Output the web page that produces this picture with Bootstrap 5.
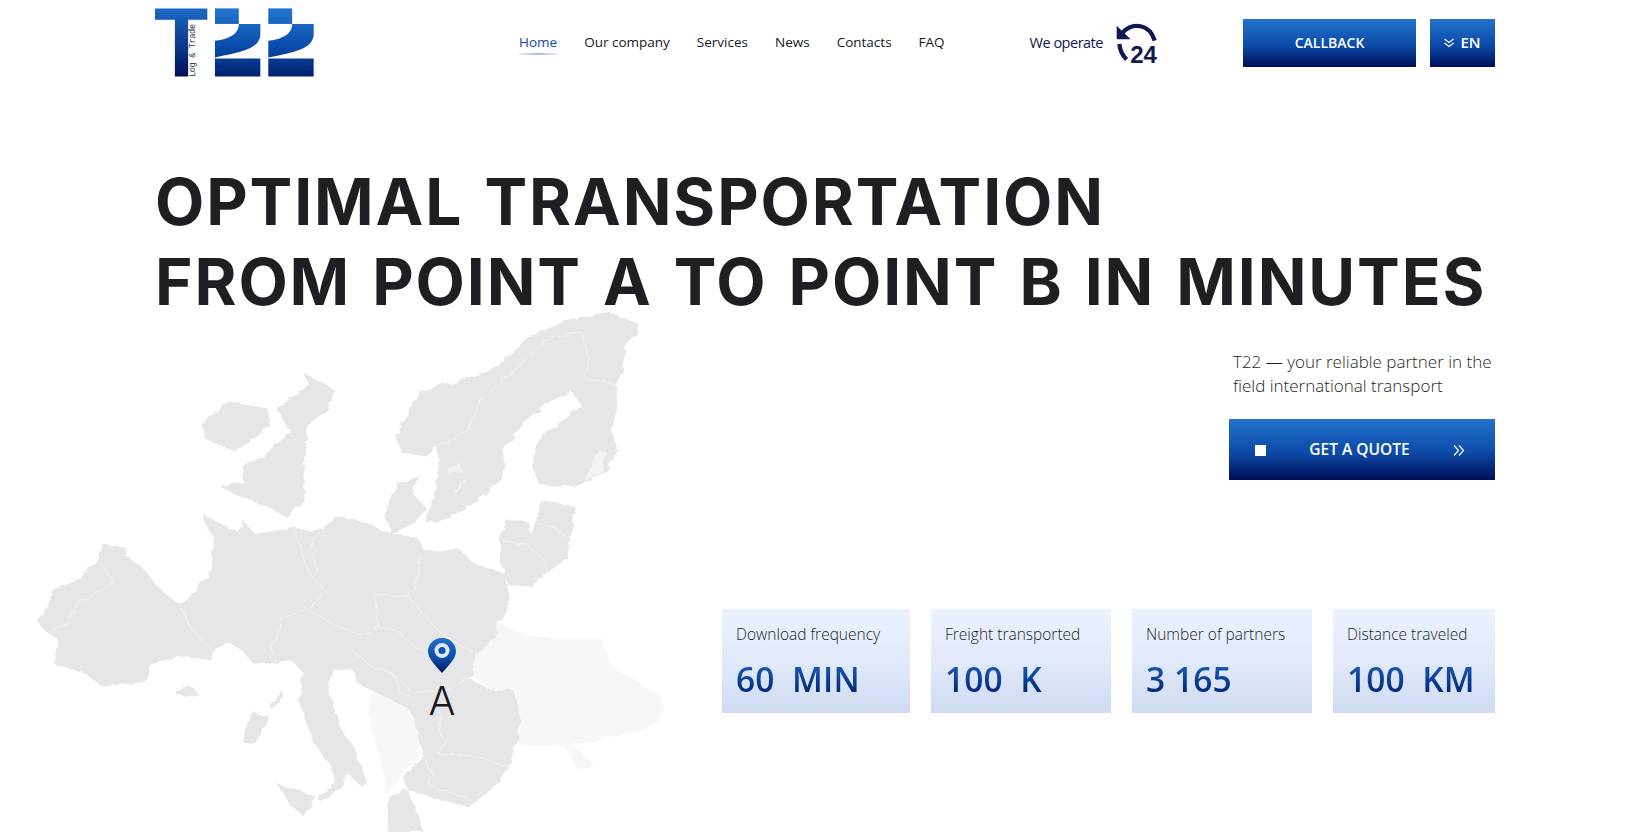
<!DOCTYPE html>
<html lang="en">
<head>
  <meta charset="UTF-8" />
  <title>T22 Log &amp; Trade</title>
  <meta name="viewport" content="width=device-width, initial-scale=1" />
  <link href="https://cdn.jsdelivr.net/npm/bootstrap@5.3.3/dist/css/bootstrap.min.css" rel="stylesheet" />
  <style>
    body {
      background: #fff;
      color: #1d1f23;
      font-family: "Open Sans", "Liberation Sans", sans-serif;
      height: 832px;
      overflow: hidden;
      position: relative;
    }
    .page-wrap { width: 1340px; margin: 0 auto; position: relative; z-index: 1; }

    /* header */
    .top-bar { height: 85px; }
    .brand-logo { display: block; width: 159px; height: 69px; margin-top: -1px; }
    .top-nav { margin-left: 205px; gap: 27px; }
    .top-nav .nav-link { padding: 0; color: #16181d; font-size: 13.5px; position: relative; }
    .top-nav .nav-link.active { color: #0f47a6; }
    .top-nav .nav-link.active::after {
      content: "";
      position: absolute;
      left: 0;
      right: 0;
      bottom: -2px;
      height: 2px;
      background: linear-gradient(90deg, #e6edf9, #a3bbe2, #e6edf9);
    }
    .operate { margin-left: 85px; font-size: 14.5px; color: #10194f; letter-spacing: -.5px; gap: 13px; }
    .operate svg { overflow: visible; }
    .blue-btn {
      background: linear-gradient(180deg, #2173cc 0%, #0c4aa8 55%, #000f58 100%);
      border: 0;
      border-radius: 0;
      color: #fff;
      font-weight: 600;
      font-size: 14px;
      --bs-btn-hover-color: #fff;
    }
    .btn-callback { width: 173px; height: 48px; margin-left: auto; }
    .btn-lang { width: 65px; height: 48px; margin-left: 14px; font-size: 15px; gap: 6px; }

    /* hero */
    .hero-title {
      margin: 77px 0 0;
      font-family: "Inter", "Liberation Sans", sans-serif;
      font-size: 64px;
      line-height: 80px;
      font-weight: 700;
      letter-spacing: 1.9px;
      word-spacing: 4px;
      color: #1d1f23;
      white-space: nowrap;
    }
    .hero-side { width: 266px; margin: 28px 0 0 auto; }
    .hero-side p { margin: 0 0 21px 4px; font-size: 17px; line-height: 24px; font-weight: 300; white-space: nowrap; }
    .btn-quote { width: 266px; height: 61px; padding: 1px 30px 0 26px; font-size: 15.5px; }
    .quote-square { width: 11px; height: 11px; background: #fff; }

    /* stats */
    .stat-row { margin-top: 129px; gap: 21px; }
    .stat-box {
      height: 104px;
      padding: 15px 14px 0;
      background: linear-gradient(180deg, #ebf1fe 0%, #e2eafa 50%, #cedbf2 100%);
    }
    .stat-box:nth-child(1) { width: 188px; }
    .stat-box:nth-child(2) { width: 180px; }
    .stat-box:nth-child(3) { width: 180px; }
    .stat-box:nth-child(4) { width: 162px; }
    .stat-label { font-size: 15.5px; line-height: 20px; font-weight: 300; white-space: nowrap; }
    .stat-value {
      margin-top: 14px;
      font-size: 33.5px;
      line-height: 42px;
      font-weight: 600;
      letter-spacing: .1px;
      white-space: nowrap;
      background: linear-gradient(180deg, #1a5ec0 10%, #00226e 90%);
      -webkit-background-clip: text;
      background-clip: text;
      color: transparent;
    }

    /* map */
    .euro-map { position: absolute; left: 0; top: 300px; width: 700px; height: 532px; z-index: 0; }
    .map-pin { position: absolute; left: 428px; top: 638px; width: 28px; height: 35px; z-index: 1; }
    .map-letter {
      position: absolute;
      left: 425px;
      top: 677px;
      width: 34px;
      text-align: center;
      font-family: "Inter", "Liberation Sans", sans-serif;
      font-size: 40px;
      line-height: 48px;
      font-weight: 300;
      color: #16181d;
      z-index: 1;
    }
  </style>
</head>
<body>
  <!-- map background, traced from the picture -->
  <svg class="euro-map" viewBox="0 0 1568 1568" preserveAspectRatio="none" aria-hidden="true">
    <defs>
      <filter id="roughCoast" x="-5%" y="-5%" width="110%" height="110%">
        <feTurbulence type="fractalNoise" baseFrequency="0.035" numOctaves="3" seed="4" result="noise" />
        <feDisplacementMap in="SourceGraphic" in2="noise" scale="16" />
      </filter>
      <filter id="softEdge" x="-5%" y="-5%" width="110%" height="110%">
        <feTurbulence type="fractalNoise" baseFrequency="0.02" numOctaves="2" seed="9" result="noise" />
        <feDisplacementMap in="SourceGraphic" in2="noise" scale="14" />
        <feGaussianBlur stdDeviation="2" />
      </filter>
    </defs>
    <g fill="#f7f7f9" filter="url(#softEdge)">
      <path d="M1060 1040L1115 950L1190 990L1270 1000L1350 1000L1370 1080L1485 1170L1475 1250L1370 1290L1280 1310L1330 1370L1290 1385L1270 1320L1180 1310L1155 1305L1165 1230L1150 1145L1100 1150L1050 1100Z" />
      <path d="M830 1155L880 1180L920 1210L945 1340L900 1400L860 1460L860 1400L840 1290L825 1220Z" />
    </g>
    <g filter="url(#roughCoast)">
      <g fill="#e6e6e9">
        <path d="M82 945L110 905L115 860L180 820L215 770L230 718L280 730L285 755L320 790L350 840L375 870L400 895L425 870L460 820L480 790L470 740L480 700L455 650L455 630L480 650L510 670L530 680L545 650L570 690L620 680L655 665L700 685L740 660L745 635L790 645L830 660L855 680L885 690L935 700L950 740L1030 735L1060 775L1135 810L1140 900L1115 950L1110 1000L1065 1040L1060 1100L1050 1115L1100 1150L1150 1145L1165 1230L1155 1310L1140 1380L1105 1440L1050 1495L980 1470L900 1440L865 1480L870 1568L950 1568L900 1400L950 1350L920 1210L880 1180L830 1150L800 1130L790 1090L750 1090L735 1130L740 1170L770 1280L790 1310L820 1420L810 1435L775 1390L770 1430L720 1480L715 1460L750 1420L745 1380L700 1300L670 1180L680 1100L655 1065L610 1070L570 1075L540 1030L510 1010L480 1030L470 1060L400 1050L335 1075L330 1120L285 1130L230 1140L190 1100L125 1075L130 1000L100 975Z" />
        <path d="M885 400L910 350L940 270L1000 245L1060 225L1130 185L1150 145L1200 100L1270 60L1360 35L1430 70L1425 110L1400 130L1395 210L1380 250L1385 310L1370 380L1385 450L1350 510L1290 550L1210 545L1190 490L1210 400L1260 360L1300 310L1280 270L1230 300L1170 370L1125 440L1130 520L1090 570L1040 620L1000 640L955 660L975 560L985 470L980 430L950 460L900 450Z" />
        <path d="M860 640L890 540L940 520L925 570L960 620L920 660L880 690Z" />
        <path d="M1120 700L1135 650L1180 650L1185 690L1205 640L1210 590L1290 610L1270 760L1220 810L1190 845L1140 840L1120 770Z" />
        <path d="M490 545L545 540L545 490L590 460L650 390L620 320L690 250L680 215L750 265L735 320L690 370L680 520L685 590L640 640L600 610L520 570Z" />
        <path d="M450 370L510 300L600 320L605 370L560 420L525 445L460 410Z" />
        <path d="M620 1425L710 1465L680 1520L650 1490Z" />
        <path d="M545 1280L565 1215L605 1230L570 1310L545 1305Z" />
        <path d="M600 1200L630 1150L635 1165L615 1205Z" />
        <path d="M390 1150L430 1140L450 1170L400 1165Z" />
      </g>
      <!-- borders -->
      <g fill="none" stroke="#f5f5f7" stroke-width="2">
        <path d="M400 895L430 970L475 1035" />
        <path d="M225 775L255 830L225 860L175 890L150 955L115 970" />
        <path d="M660 670L690 800L730 860L690 910L630 940L610 1030L615 1070" />
        <path d="M945 745L925 850L915 875L840 870L850 965L810 990L740 950L680 905" />
        <path d="M915 875L985 980L1060 1040" />
        <path d="M850 965L890 975L925 1020L990 1060" />
        <path d="M780 1020L830 1080L880 1100L925 1160L1000 1150L1050 1115" />
        <path d="M880 1100L900 1160L925 1170" />
        <path d="M990 1230L980 1270L1000 1300L985 1340L1020 1340L1080 1350L1140 1380" />
        <path d="M950 1350L970 1400L960 1430L1050 1470" />
        <path d="M985 430L1050 380L1080 290L1150 210L1220 120L1300 90" />
        <path d="M1300 90L1320 170L1310 230L1380 250" />
        <path d="M1125 710L1180 720L1220 770L1225 810" />
        <path d="M1205 660L1240 670L1270 700" />
        <path d="M730 660L700 720L710 800" />
      </g>
      <g fill="#f3f3f5">
        <path d="M1000 500L1030 480L1035 505L1010 515Z" />
        <path d="M1015 560L1045 525L1040 540L1020 565Z" />
        <path d="M1310 530L1340 440L1360 450L1345 510Z" />
      </g>
    </g>
  </svg>

  <svg class="map-pin" viewBox="0 0 28 35" aria-hidden="true">
    <defs>
      <linearGradient id="pinFill" x1="0" y1="0" x2="0" y2="1">
        <stop offset="0" stop-color="#1f6fca" />
        <stop offset=".55" stop-color="#0d4dac" />
        <stop offset="1" stop-color="#001a63" />
      </linearGradient>
    </defs>
    <path fill="url(#pinFill)" d="M14 0C6 0 0 6 0 13.5C0 21 9 29 14 35C19 29 28 21 28 13.5C28 6 22 0 14 0Z" />
    <circle cx="14" cy="12.5" r="7.5" fill="#dfe8f7" />
    <circle cx="14" cy="12.5" r="3.6" fill="#0f4fae" />
  </svg>
  <div class="map-letter">A</div>

  <div class="page-wrap">
    <header class="top-bar d-flex align-items-center">
      <a href="#" class="d-block">
        <svg class="brand-logo" viewBox="72 24 480 206" role="img" aria-label="T22 Log &amp; Trade">
          <defs>
            <linearGradient id="logoFill" gradientUnits="userSpaceOnUse" x1="0" y1="24" x2="0" y2="230">
              <stop offset="0" stop-color="#2176cf" />
              <stop offset=".55" stop-color="#0c4cac" />
              <stop offset="1" stop-color="#00226e" />
            </linearGradient>
            <linearGradient id="stemFill" gradientUnits="userSpaceOnUse" x1="0" y1="24" x2="0" y2="230">
              <stop offset="0" stop-color="#1b69c4" />
              <stop offset="1" stop-color="#000f58" />
            </linearGradient>
          </defs>
          <path fill="url(#stemFill)" d="M72 24H230V58H172V230H132V58H72Z" />
          <g fill="url(#logoFill)">
            <path d="M253 24H325V71H253Z" />
            <path d="M325 71H390V105C385 145 340 155 253 172V122C300 115 325 100 325 71Z" />
            <path d="M258 175H390V230H253V175Z" />
            <path d="M414 24H486V71H414Z" />
            <path d="M486 71H551V105C546 145 501 155 414 172V122C461 115 486 100 486 71Z" />
            <path d="M419 175H551V230H414V175Z" />
          </g>
          <text transform="translate(194 231) rotate(-90)" font-family="Liberation Mono, monospace" font-size="26" fill="#2c3c58" textLength="160">Log &amp; Trade</text>
        </svg>
      </a>

      <nav class="nav top-nav">
        <a class="nav-link active" href="#">Home</a>
        <a class="nav-link" href="#">Our company</a>
        <a class="nav-link" href="#">Services</a>
        <a class="nav-link" href="#">News</a>
        <a class="nav-link" href="#">Contacts</a>
        <a class="nav-link" href="#">FAQ</a>
      </nav>

      <div class="operate d-flex align-items-center">
        <span>We operate</span>
        <svg width="41" height="42" viewBox="348 64 124 126" aria-hidden="true">
          <path fill="none" stroke="#10194f" stroke-width="13" d="M368 95C400 62 450 70 465 120" />
          <path fill="#10194f" d="M350 75V116H392Z" />
          <path fill="none" stroke="#10194f" stroke-width="13" d="M358 130C360 150 368 165 380 177" />
          <text x="391" y="187" font-family="Liberation Sans, sans-serif" font-weight="700" font-size="72" fill="#10194f" textLength="80" lengthAdjust="spacingAndGlyphs">24</text>
        </svg>
      </div>

      <a href="#" class="btn blue-btn btn-callback d-flex align-items-center justify-content-center">CALLBACK</a>
      <a href="#" class="btn blue-btn btn-lang d-flex align-items-center justify-content-center">
        <svg width="10" height="10" viewBox="0 0 10 10" aria-hidden="true">
          <path fill="none" stroke="#fff" stroke-width="1.2" d="M.5 1L5 4.5L9.5 1M.5 5L5 8.5L9.5 5" />
        </svg>
        EN
      </a>
    </header>

    <h1 class="hero-title">OPTIMAL TRANSPORTATION<br />FROM POINT A TO POINT B IN MINUTES</h1>

    <div class="hero-side">
      <p>T22 — your reliable partner in the<br />field international transport</p>
      <a href="#" class="btn blue-btn btn-quote d-flex align-items-center justify-content-between">
        <span class="quote-square"></span>
        <span>GET A QUOTE</span>
        <svg width="12" height="11" viewBox="0 0 12 11" aria-hidden="true">
          <path fill="none" stroke="#fff" stroke-width="1.2" d="M1 .5L5.5 5.5L1 10.5M6 .5L10.5 5.5L6 10.5" />
        </svg>
      </a>
    </div>

    <div class="stat-row d-flex justify-content-end">
      <div class="stat-box">
        <div class="stat-label">Download frequency</div>
        <div class="stat-value">60&nbsp; MIN</div>
      </div>
      <div class="stat-box">
        <div class="stat-label">Freight transported</div>
        <div class="stat-value">100&nbsp; K</div>
      </div>
      <div class="stat-box">
        <div class="stat-label">Number of partners</div>
        <div class="stat-value">3 165</div>
      </div>
      <div class="stat-box">
        <div class="stat-label">Distance traveled</div>
        <div class="stat-value">100&nbsp; KM</div>
      </div>
    </div>
  </div>
</body>
</html>
